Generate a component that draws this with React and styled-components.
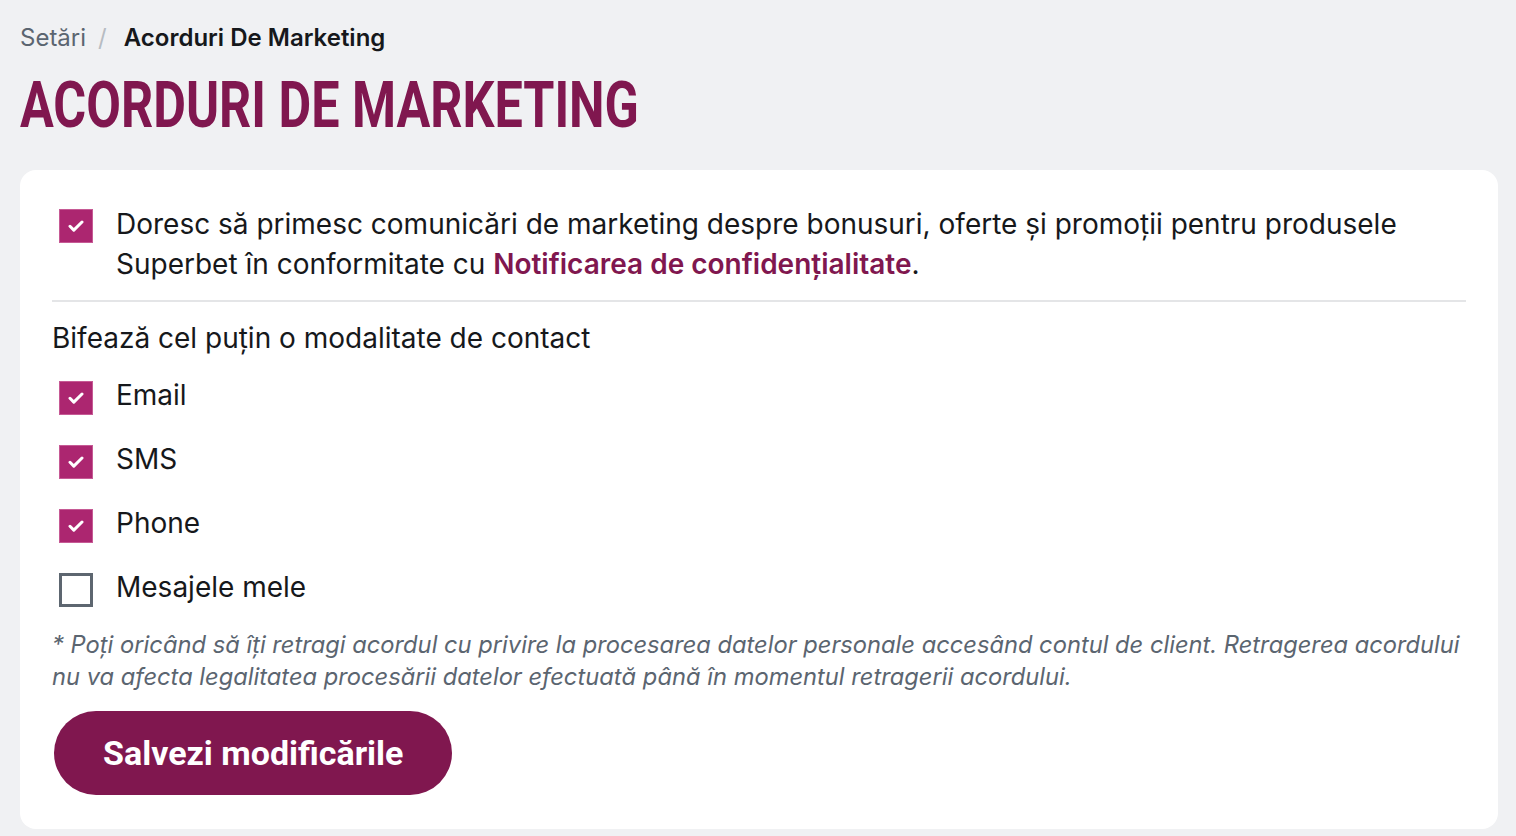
import { useState } from "react";
import styled, { createGlobalStyle } from "styled-components";

const GlobalStyle = createGlobalStyle`
  html, body {
    margin: 0;
    background: #f0f1f3;
  }
  body {
    font-family: Inter, "Noto Sans", sans-serif;
    color: #16181b;
  }
`;

const Page = styled.div`
  padding: 20px 18px 6px 20px;
`;

const Breadcrumb = styled.nav`
  display: flex;
  align-items: center;
  gap: 12px;
  font-size: 24px;
  line-height: 36px;
  height: 36px;
`;

const Crumb = styled.span`
  color: ${(p) => (p.current ? "#16181b" : "#5b6570")};
  font-weight: ${(p) => (p.current ? 600 : 400)};
`;

const Slash = styled.span`
  color: #b7bcc2;
  margin-right: 5px;
`;

const Title = styled.h1`
  margin: 18px 0 32px;
  font-family: Roboto, sans-serif;
  font-weight: 700;
  font-size: 64px;
  line-height: 64px;
  color: #80174f;
  transform: scaleX(0.786);
  transform-origin: left center;
  white-space: nowrap;
`;

const Card = styled.section`
  background: #fff;
  border-radius: 16px;
  padding: 34px 32px 34px;
`;

const Row = styled.div`
  display: flex;
  align-items: flex-start;
  gap: 23px;
  padding-left: 7px;
  font-size: 28px;
  line-height: 40px;
`;

const Option = styled(Row)`
  align-items: center;
  height: 64px;
`;

const Box = styled.span`
  flex: none;
  box-sizing: border-box;
  width: 34px;
  height: 34px;
  margin-top: ${(p) => p.$offset}px;
  display: flex;
  align-items: center;
  justify-content: center;
  background: ${(p) => (p.$checked ? "#ac2670" : "#fff")};
  border: ${(p) => (p.$checked ? "1px solid #c65a95" : "3px solid #5d6670")};
  cursor: pointer;
`;

const Link = styled.a`
  color: #80174f;
  font-weight: 600;
  text-decoration: none;
`;

const Divider = styled.hr`
  border: 0;
  border-top: 2px solid #e4e5e7;
  margin: 16px 0 16px;
`;

const Subtitle = styled.div`
  font-size: 28px;
  line-height: 40px;
  margin-bottom: 5px;
`;

const Note = styled.p`
  margin: 10px 0 18px;
  font-size: 23.7px;
  line-height: 32px;
  font-style: italic;
  color: #5b6570;
`;

const SaveButton = styled.button`
  height: 84px;
  padding: 0 49px;
  margin-left: 2px;
  border: 0;
  border-radius: 42px;
  background: #80174f;
  color: #fff;
  font-family: Roboto, sans-serif;
  font-weight: 700;
  font-size: 34px;
  cursor: pointer;
`;

const Check = () => (
  <svg width="16" height="12" viewBox="0 0 16 12" fill="none">
    <path
      d="M2 6.3l3.8 3.8L14 2"
      stroke="#fff"
      strokeWidth="3"
      strokeLinecap="round"
      strokeLinejoin="round"
    />
  </svg>
);

const CheckBox = ({ checked, onToggle, offset = 0 }) => (
  <Box $checked={checked} $offset={offset} onClick={onToggle}>
    {checked && <Check />}
  </Box>
);

const channels = ["Email", "SMS", "Phone", "Mesajele mele"];

export default function App() {
  const [consent, setConsent] = useState(true);
  const [picked, setPicked] = useState({
    Email: true,
    SMS: true,
    Phone: true,
    "Mesajele mele": false,
  });

  const toggle = (name) => setPicked({ ...picked, [name]: !picked[name] });

  return (
    <Page>
      <GlobalStyle />
      <Breadcrumb>
        <Crumb>Setări</Crumb>
        <Slash>/</Slash>
        <Crumb current>Acorduri De Marketing</Crumb>
      </Breadcrumb>
      <Title>ACORDURI DE MARKETING</Title>
      <Card>
        <Row>
          <CheckBox offset={5} checked={consent} onToggle={() => setConsent(!consent)} />
          <span>
            Doresc să primesc comunicări de marketing despre bonusuri, oferte
            și promoții pentru produsele Superbet în conformitate cu{" "}
            <Link href="#">Notificarea de confidențialitate</Link>.
          </span>
        </Row>
        <Divider />
        <Subtitle>Bifează cel puțin o modalitate de contact</Subtitle>
        {channels.map((name) => (
          <Option key={name}>
            <CheckBox offset={5} checked={picked[name]} onToggle={() => toggle(name)} />
            <span>{name}</span>
          </Option>
        ))}
        <Note>
          * Poți oricând să îți retragi acordul cu privire la procesarea
          datelor personale accesând contul de client. Retragerea acordului nu
          va afecta legalitatea procesării datelor efectuată până în momentul
          retragerii acordului.
        </Note>
        <SaveButton>Salvezi modificările</SaveButton>
      </Card>
    </Page>
  );
}
